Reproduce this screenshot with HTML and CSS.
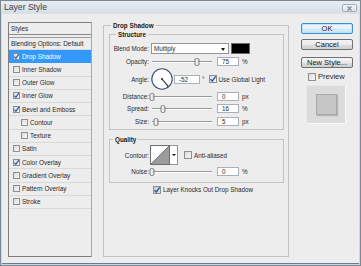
FILE: index.html
```html
<!DOCTYPE html>
<html>
<head>
<meta charset="utf-8">
<title>Layer Style</title>
<link rel="stylesheet" href="styles.css">
</head>
<body>
<div class="window">
  <div class="titlebar">
    <span class="title">Layer Style</span>
    <span class="close"><svg width="7" height="5" viewBox="0 0 7 5"><path d="M1.5 0.5 L5.5 4.5 M5.5 0.5 L1.5 4.5" stroke="#7d858e" stroke-width="1.1" fill="none"/></svg></span>
  </div>
  <div class="client">
    <div class="sidebar">
      <div class="side-head">Styles</div>
      <ul class="style-list">
        <li class="row first">Blending Options: Default</li>
        <li class="row selected"><span class="cb"><svg class="chk" viewBox="0 0 7 7"><path d="M1.3 3.6 L2.9 5.3 L5.8 1.2"/></svg></span>Drop Shadow</li>
        <li class="row"><span class="cb"></span>Inner Shadow</li>
        <li class="row"><span class="cb"></span>Outer Glow</li>
        <li class="row"><span class="cb"><svg class="chk" viewBox="0 0 7 7"><path d="M1.3 3.6 L2.9 5.3 L5.8 1.2"/></svg></span>Inner Glow</li>
        <li class="row"><span class="cb"><svg class="chk" viewBox="0 0 7 7"><path d="M1.3 3.6 L2.9 5.3 L5.8 1.2"/></svg></span>Bevel and Emboss</li>
        <li class="row sub"><span class="cb"></span>Contour</li>
        <li class="row sub"><span class="cb"></span>Texture</li>
        <li class="row"><span class="cb"></span>Satin</li>
        <li class="row"><span class="cb"><svg class="chk" viewBox="0 0 7 7"><path d="M1.3 3.6 L2.9 5.3 L5.8 1.2"/></svg></span>Color Overlay</li>
        <li class="row"><span class="cb"></span>Gradient Overlay</li>
        <li class="row"><span class="cb"></span>Pattern Overlay</li>
        <li class="row"><span class="cb"></span>Stroke</li>
      </ul>
    </div>

    <fieldset class="group main-group">
      <legend class="lg-main">Drop Shadow</legend>

      <fieldset class="group structure">
        <legend class="lg-struct">Structure</legend>
        <div class="frow blend-row">
          <span class="lbl">Blend Mode:</span>
          <div class="select">Multiply<span class="arrow"></span></div>
          <div class="swatch"></div>
        </div>
        <div class="frow opacity-row">
          <span class="lbl">Opacity:</span>
          <div class="slider"><span class="thumb" style="left:46px"></span></div>
          <div class="field">75</div>
          <span class="unit">%</span>
        </div>
        <div class="frow angle-row">
          <span class="lbl">Angle:</span>
          <svg class="dial" width="22" height="22" viewBox="0 0 22 22">
            <circle cx="11" cy="11" r="10.2" fill="#fff" stroke="#3d4c6e" stroke-width="1.1"/>
            <path d="M11 11 L17.3 18.6" stroke="#1c2638" stroke-width="1.1"/>
            <circle cx="11" cy="11" r="1" fill="#1c2638"/>
          </svg>
          <div class="field angle-field">-52</div>
          <span class="deg">°</span>
          <span class="cb big gl"><svg class="chk" viewBox="0 0 7 7"><path d="M1.3 3.6 L2.9 5.3 L5.8 1.2"/></svg></span>
          <span class="cb-text">Use Global Light</span>
        </div>
        <div class="frow dist-row">
          <span class="lbl">Distance:</span>
          <div class="slider"><span class="thumb" style="left:1px"></span></div>
          <div class="field">0</div>
          <span class="unit">px</span>
        </div>
        <div class="frow spread-row">
          <span class="lbl">Spread:</span>
          <div class="slider"><span class="thumb" style="left:12px"></span></div>
          <div class="field">16</div>
          <span class="unit">%</span>
        </div>
        <div class="frow size-row">
          <span class="lbl">Size:</span>
          <div class="slider"><span class="thumb" style="left:5px"></span></div>
          <div class="field">5</div>
          <span class="unit">px</span>
        </div>
      </fieldset>

      <fieldset class="group quality">
        <legend class="lg-qual">Quality</legend>
        <div class="frow contour-row">
          <span class="lbl">Contour:</span>
          <div class="contour">
            <svg width="18" height="18" viewBox="0 0 18 18"><path d="M0 18 L18 0 L18 18 Z" fill="#9c9c9c"/><path d="M0 18 L18 0" stroke="#5a5a5a" stroke-width="0.8"/></svg>
          </div>
          <div class="contour-btn"><span class="arrow small"></span></div>
          <span class="cb big aa"></span>
          <span class="cb-text">Anti-aliased</span>
        </div>
        <div class="frow noise-row">
          <span class="lbl">Noise:</span>
          <div class="slider"><span class="thumb" style="left:1px"></span></div>
          <div class="field">0</div>
          <span class="unit">%</span>
        </div>
      </fieldset>

      <div class="frow knock-row">
        <span class="cb big shaded"><svg class="chk" viewBox="0 0 7 7"><path d="M1.3 3.6 L2.9 5.3 L5.8 1.2"/></svg></span>
        <span class="cb-text">Layer Knocks Out Drop Shadow</span>
      </div>
    </fieldset>

    <div class="actions">
      <div class="btn default">OK</div>
      <div class="btn cancel">Cancel</div>
      <div class="btn newstyle">New Style...</div>
      <div class="preview-row">
        <span class="cb big"></span>
        <span class="preview-label">Preview</span>
      </div>
      <div class="preview-box"><div class="preview-swatch"></div></div>
    </div>
  </div>
</div>
</body>
</html>
```

FILE: styles.css
```css
* { box-sizing: border-box; margin: 0; padding: 0; }
html, body { width: 361px; height: 266px; overflow: hidden; }
body {
  font-family: "Liberation Sans", Arial, sans-serif;
  font-size: 6.3px;
  color: #2a2a2a;
  background: #ececec;
}

.window {
  width: 361px;
  height: 266px;
  display: flex;
  flex-direction: column;
  border: 1px solid #7c8794;
  background: linear-gradient(#e6ecf2, #d6dee8 13px, #cdd6e0);
}

.titlebar {
  height: 13px;
  display: flex;
  align-items: center;
  justify-content: space-between;
  padding: 0 3px 0 3px;
}
.title { font-size: 8.6px; line-height: 13px; color: #3b4048; }
.close {
  width: 15px;
  height: 8px;
  margin-top: 1px;
  border: 1px solid #a4aeb9;
  border-radius: 2px;
  background: linear-gradient(#f3f6f9, #dfe5eb);
  display: flex;
  align-items: center;
  justify-content: center;
}
.close svg { display: block; }

.client {
  flex: 1;
  margin: 0 1px 1px 1px;
  background: #ededed;
  border-bottom: 1px solid #6e7a87;
  display: flex;
  padding: 7px 6px 6px 6px;
}

/* ---------- left style list ---------- */
.sidebar {
  width: 84px;
  flex: none;
  margin-top: 1px;
  border: 1px solid #7e7e7e;
  border-right-color: #a9a9a9;
  display: flex;
  flex-direction: column;
}
.side-head {
  height: 12px;
  line-height: 11px;
  padding-left: 2px;
  border-bottom: 1px solid #8c8c8c;
  font-size: 6.3px;
}
.style-list {
  list-style: none;
  margin-top: 2px;
  border-top: 1px solid #9e9e9e;
  font-size: 6.4px;
}
.row {
  height: 13.25px;
  display: flex;
  align-items: center;
  padding-left: 4px;
  border-bottom: 1px solid #d9d9d9;
  white-space: nowrap;
}
.row.first { height: 12px; padding-left: 2px; }
.row.sub { padding-left: 12px; }
.row.selected { background: #3399ff; color: #fff; border-bottom-color: #3399ff; }

.cb {
  width: 7px;
  height: 7px;
  flex: none;
  border: 1px solid #8e8e8e;
  background: linear-gradient(135deg, #dcdcdc, #f8f8f8);
  margin-right: 2px;
  position: relative;
}
.cb.big { width: 8px; height: 8px; }
.cb.shaded { background: linear-gradient(135deg, #c9c9c9, #e6e6e6); }
.chk {
  position: absolute;
  left: -1px;
  top: -1px;
  width: 7px;
  height: 7px;
}
.cb.big .chk { width: 8px; height: 8px; }
.chk path { fill: none; stroke: #2b56a6; stroke-width: 1.2; }

/* ---------- group boxes ---------- */
.group {
  border: 1px solid #c3c3c3;
  min-width: 0;
}
.group legend {
  font-weight: bold;
  line-height: 9px;
  padding: 0 2px;
  color: #1a1a1a;
}
.main-group {
  width: 186px;
  flex: none;
  margin-left: 11px;
  padding: 0 4px 0 5px;
  display: block;
}
.lg-main { margin-left: 2px; }
.structure { padding: 4px 0 3px 0; }
.lg-struct { margin-left: 6px; }
.quality { margin-top: 5px; padding: 1px 0 6px 0; }
.lg-qual { margin-left: 3px; }

.frow { display: flex; align-items: center; height: 9px; white-space: nowrap; }
.lbl { width: 39px; flex: none; text-align: right; }

.blend-row { height: 11px; }
.opacity-row { margin-top: 3px; }
.angle-row { margin-top: 2px; height: 22px; }
.dist-row { margin-top: 2px; }
.spread-row { margin-top: 3px; }
.size-row { margin-top: 4px; }

.select {
  width: 78px;
  height: 11px;
  margin-left: 2px;
  border: 1px solid #8e959d;
  background: #fff;
  padding-left: 2px;
  line-height: 9px;
  position: relative;
}
.arrow {
  position: absolute;
  right: 3px;
  top: 3.5px;
  width: 0;
  height: 0;
  border-left: 2.5px solid transparent;
  border-right: 2.5px solid transparent;
  border-top: 3px solid #111;
}
.swatch {
  width: 19px;
  height: 11px;
  margin-left: 2px;
  background: #000;
  border: 1px solid #6a6a6a;
}

.slider {
  width: 62px;
  height: 9px;
  margin-left: 2px;
  position: relative;
  flex: none;
}
.slider::before {
  content: "";
  position: absolute;
  left: 1px;
  right: 1px;
  top: 4px;
  height: 1px;
  background: #9a9a9a;
  box-shadow: 0 1px 0 #fff;
}
.thumb {
  position: absolute;
  top: 0.5px;
  width: 5px;
  height: 8px;
  transform: translateX(-50%);
  border: 1px solid #7a7a7a;
  border-radius: 2px;
  background: linear-gradient(90deg, #fdfdfd, #d8d8d8);
}
.field {
  width: 22px;
  height: 9px;
  margin-left: 4px;
  border: 1px solid #a8b0ba;
  background: #fff;
  padding-left: 4px;
  line-height: 7px;
  flex: none;
}
.unit { margin-left: 3px; }

.dial { margin-left: 2px; display: block; flex: none; }
.angle-field { width: 26px; margin-left: 1px; }
.deg { margin-left: 2px; }
.gl { margin-left: 4px; }
.cb-text { margin-left: 0; }

.contour-row { height: 20px; }
.contour {
  width: 20px;
  height: 20px;
  margin-left: 1px;
  border: 1px solid #6f6f6f;
  background: #fff;
  flex: none;
}
.contour svg { display: block; }
.contour-btn {
  width: 8px;
  height: 20px;
  border: 1px solid #8e959d;
  border-left: none;
  background: #fff;
  position: relative;
  flex: none;
}
.arrow.small { right: 1px; top: 8px; border-left-width: 2px; border-right-width: 2px; border-top-width: 2.5px; }
.aa { margin-left: 6px; }
.noise-row { margin-top: 2px; }

.knock-row { margin-top: 2px; padding-left: 44px; }

/* ---------- right column ---------- */
.actions {
  width: 52px;
  flex: none;
  margin-left: 12px;
  display: flex;
  flex-direction: column;
}
.btn {
  height: 11px;
  border: 1px solid #707070;
  border-radius: 2px;
  background: linear-gradient(#f4f4f4 0%, #ebebeb 50%, #dddddd 51%, #d1d1d1 100%);
  font-size: 7.5px;
  line-height: 9px;
  text-align: center;
  color: #1a1a1a;
}
.btn.default {
  margin-top: 2px;
  border-color: #3c8fd0;
  box-shadow: inset 0 0 0 1px #b9e4fb;
  background: linear-gradient(#f1f8fc 0%, #e6f2f9 50%, #d7eaf5 51%, #cfe4f1 100%);
}
.btn.cancel { margin-top: 5px; }
.btn.newstyle { margin-top: 7px; }
.preview-row {
  margin-top: 4px;
  height: 9px;
  display: flex;
  align-items: center;
  padding-left: 7px;
}
.preview-label { font-size: 7.5px; margin-left: 0; }
.preview-box {
  margin: 4px 0 0 5px;
  width: 40px;
  height: 39px;
  background: #dcdcdc;
  border: 1px solid #e9e9e9;
  border-right-color: #f8f8f8;
  border-bottom-color: #f8f8f8;
  display: flex;
  align-items: center;
  justify-content: center;
}
.preview-swatch {
  width: 21px;
  height: 21px;
  background: #c6c6c6;
  border: 1px solid #a9a9a9;
  box-shadow: 1px 1px 1px #b5b5b5;
  margin-left: 1px;
}
```
